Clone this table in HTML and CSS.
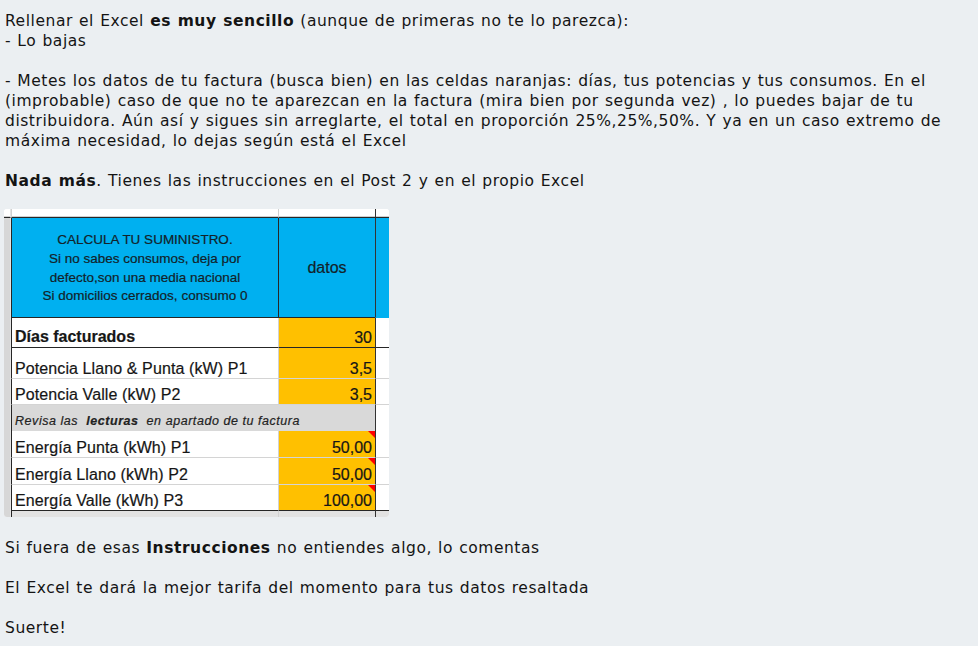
FILE: index.html
```html
<!DOCTYPE html>
<html lang="es">
<head>
<meta charset="utf-8">
<title>Rellenar el Excel</title>
<link rel="stylesheet" href="styles.css">
</head>
<body>
<div class="post">
  <p class="para">Rellenar el Excel <b>es muy sencillo</b> (aunque de primeras no te lo parezca):<br>- Lo bajas</p>
  <p class="para">- Metes los datos de tu factura (busca bien) en las celdas naranjas: días, tus potencias y tus consumos. En el<br>(improbable) caso de que no te aparezcan en la factura (mira bien por segunda vez) , lo puedes bajar de tu<br>distribuidora. Aún así y sigues sin arreglarte, el total en proporción 25%,25%,50%. Y ya en un caso extremo de<br>máxima necesidad, lo dejas según está el Excel</p>
  <p class="para"><b>Nada más</b>. Tienes las instrucciones en el Post 2 y en el propio Excel</p>

  <div class="sheet">
    <div class="c strip top"></div>
    <div class="c c1 top"></div>
    <div class="c c2 top"></div>
    <div class="c c3 top"></div>

    <div class="c strip"></div>
    <div class="c c1 head">CALCULA TU SUMINISTRO.<br>Si no sabes consumos, deja por<br>defecto,son una media nacional<br>Si domicilios cerrados, consumo 0</div>
    <div class="c c2 head datos">datos</div>
    <div class="c c3 head"></div>

    <div class="c strip"></div>
    <div class="c c1 dark-b bold">Días facturados</div>
    <div class="c c2 dark-b val">30</div>
    <div class="c c3 dark-b"></div>

    <div class="c strip"></div>
    <div class="c c1 rowtxt">Potencia Llano &amp; Punta (kW) P1</div>
    <div class="c c2 val">3,5</div>
    <div class="c c3"></div>

    <div class="c strip"></div>
    <div class="c c1 rowtxt">Potencia Valle (kW) P2</div>
    <div class="c c2 val">3,5</div>
    <div class="c c3"></div>

    <div class="c strip"></div>
    <div class="c merged"><i>Revisa las&nbsp; <b>lecturas</b>&nbsp; en apartado de tu factura</i></div>
    <div class="c c3 nob"></div>

    <div class="c strip"></div>
    <div class="c c1 rowtxt">Energía Punta (kWh) P1</div>
    <div class="c c2 val note">50,00</div>
    <div class="c c3"></div>

    <div class="c strip"></div>
    <div class="c c1 rowtxt">Energía Llano (kWh) P2</div>
    <div class="c c2 val note">50,00</div>
    <div class="c c3"></div>

    <div class="c strip"></div>
    <div class="c c1 rowtxt dark-b">Energía Valle (kWh) P3</div>
    <div class="c c2 val note dark-b">100,00</div>
    <div class="c c3 dark-b"></div>

    <div class="c strip"></div>
    <div class="c c1 bottom"></div>
    <div class="c c2 bottom"></div>
    <div class="c c3 bottom"></div>
  </div>

  <p class="para after">Si fuera de esas <b>Instrucciones</b> no entiendes algo, lo comentas</p>
  <p class="para">El Excel te dará la mejor tarifa del momento para tus datos resaltada</p>
  <p class="para">Suerte!</p>
</div>
</body>
</html>
```
FILE: styles.css
```css
html, body {
  margin: 0;
  padding: 0;
  background: #ebeff2;
}
.post {
  padding: 11px 5px 0 5px;
  font-family: "DejaVu Sans", Verdana, sans-serif;
  font-size: 15.5px;
  letter-spacing: 0.55px;
  word-spacing: 0.7px;
  line-height: 20px;
  color: #141414;
}
.para {
  margin: 0 0 20px 0;
  white-space: nowrap;
}
.para b {
  font-weight: bold;
}
.sheet {
  margin: -2px 0 0 -1px;
  width: 385px;
  height: 308px;
  display: grid;
  grid-template-columns: 7px 267px 97px 14px;
  grid-template-rows: 9px 100px 30px 31px 26px 26px 27px 27px 26px 6px;
  border-radius: 3px;
  overflow: hidden;
  background: #fff;
  font-family: "Liberation Sans", Arial, sans-serif;
  letter-spacing: 0;
  word-spacing: 0;
  color: #161616;
  line-height: 1.15;
  -webkit-text-stroke: 0.2px currentColor;
}
.c {
  box-sizing: border-box;
  border-bottom: 1px solid #d4d4d4;
  position: relative;
}
.strip {
  background: #d7d7d7;
  border-bottom: none;
  border-right: 1px solid #e4e4e4;
}
.c1 {
  border-left: 1px solid #262626;
  background: #fff;
}
.c2 {
  border-left: 1px solid #d2d2d2;
  background: #ffc000;
}
.c3 {
  border-left: 1px solid #333;
  background: #fff;
}
.top {
  background: #fff;
  border-bottom: 1px solid #262626;
  box-shadow: inset 0 -1px 0 #cfcfcf;
}
.top.c1 { border-left-color: #d0d0d0; }
.top.c2 { border-left-color: #d0d0d0; background: #fff; }
.head {
  background: #00b0f0;
  border-bottom: 1px solid #262626;
}
.head.c2 { border-left-color: #262626; }
.head.c3 { border-bottom-color: #00b0f0; }
.head.c1 {
  display: flex;
  align-items: center;
  justify-content: center;
  text-align: center;
  font-size: 13.5px;
  line-height: 18.6px;
  color: #132229;
  padding-top: 2px;
}
.head.datos {
  display: flex;
  align-items: center;
  justify-content: center;
  font-size: 16px;
  color: #132229;
  padding-top: 1px;
}
.dark-b {
  border-bottom: 1px solid #262626;
}
.bold {
  font-weight: bold;
  font-size: 16px;
  display: flex;
  align-items: flex-end;
  padding: 0 0 1px 3px;
}
.rowtxt {
  font-size: 16px;
  display: flex;
  align-items: flex-end;
  padding: 0 0 0 3px;
  letter-spacing: 0.1px;
}
.val {
  font-size: 16px;
  display: flex;
  align-items: flex-end;
  justify-content: flex-end;
  padding: 0 3px 0 0;
}
.merged {
  grid-column: span 2;
  background: #d9d9d9;
  border-left: 1px solid #262626;
  border-bottom: none;
  font-size: 12.5px;
  letter-spacing: 0.55px;
  display: flex;
  align-items: center;
  padding: 6px 0 0 3px;
  color: #222;
}
.nob { border-bottom: none; }
.note::after {
  content: "";
  position: absolute;
  top: 0;
  right: 0;
  border-top: 7px solid #ff0000;
  border-left: 7px solid transparent;
}
.bottom {
  background: #e2e2e2;
  border-bottom: none;
}
.bottom.c2 { background: #e2e2e2; }
.after {
  margin-top: 21px;
}
```
